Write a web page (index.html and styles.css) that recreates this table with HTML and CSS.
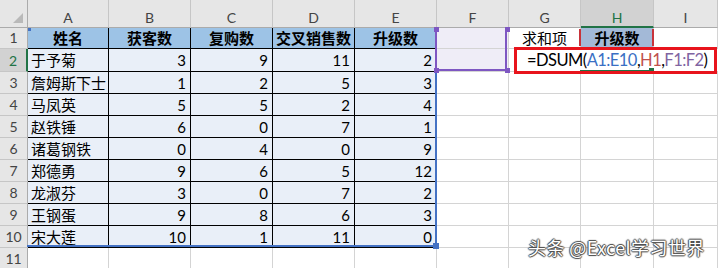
FILE: index.html
```html
<!DOCTYPE html>
<html>
<head>
<meta charset="utf-8">
<link rel="stylesheet" href="styles.css">
</head>
<body>
<div class="sheet">
  <div class="grid">
    <div class="corner"><span class="tri"></span></div>
    <div class="ch">A</div><div class="ch">B</div><div class="ch">C</div><div class="ch">D</div><div class="ch">E</div><div class="ch">F</div><div class="ch">G</div><div class="ch ch-sel">H</div><div class="ch">I</div>

    <div class="rh">1</div>
    <div class="c t th">姓名</div><div class="c t th">获客数</div><div class="c t th">复购数</div><div class="c t th">交叉销售数</div><div class="c t th">升级数</div>
    <div class="c fsel"></div><div class="c crit">求和项</div><div class="c crit-h">升级数</div><div class="c"></div>

    <div class="rh rh-sel">2</div>
    <div class="c t">于予菊</div><div class="c t n">3</div><div class="c t n">9</div><div class="c t n">11</div><div class="c t n">2</div>
    <div class="c fsel"></div><div class="c formula"><span>=DSUM(</span><span class="ref-a">A1:E10</span><span>,</span><span class="ref-h">H1</span><span>,</span><span class="ref-f">F1:F2</span><span>)</span></div>

    <div class="rh">3</div>
    <div class="c t">詹姆斯下士</div><div class="c t n">1</div><div class="c t n">2</div><div class="c t n">5</div><div class="c t n">3</div>
    <div class="c"></div><div class="c"></div><div class="c"></div><div class="c"></div>

    <div class="rh">4</div>
    <div class="c t">马凤英</div><div class="c t n">5</div><div class="c t n">5</div><div class="c t n">2</div><div class="c t n">4</div>
    <div class="c"></div><div class="c"></div><div class="c"></div><div class="c"></div>

    <div class="rh">5</div>
    <div class="c t">赵铁锤</div><div class="c t n">6</div><div class="c t n">0</div><div class="c t n">7</div><div class="c t n">1</div>
    <div class="c"></div><div class="c"></div><div class="c"></div><div class="c"></div>

    <div class="rh">6</div>
    <div class="c t">诸葛钢铁</div><div class="c t n">0</div><div class="c t n">4</div><div class="c t n">0</div><div class="c t n">9</div>
    <div class="c"></div><div class="c"></div><div class="c"></div><div class="c"></div>

    <div class="rh">7</div>
    <div class="c t">郑德勇</div><div class="c t n">9</div><div class="c t n">6</div><div class="c t n">5</div><div class="c t n">12</div>
    <div class="c"></div><div class="c"></div><div class="c"></div><div class="c"></div>

    <div class="rh">8</div>
    <div class="c t">龙淑芬</div><div class="c t n">3</div><div class="c t n">0</div><div class="c t n">7</div><div class="c t n">2</div>
    <div class="c"></div><div class="c"></div><div class="c"></div><div class="c"></div>

    <div class="rh">9</div>
    <div class="c t">王钢蛋</div><div class="c t n">9</div><div class="c t n">8</div><div class="c t n">6</div><div class="c t n">3</div>
    <div class="c"></div><div class="c"></div><div class="c"></div><div class="c"></div>

    <div class="rh">10</div>
    <div class="c t">宋大莲</div><div class="c t n">10</div><div class="c t n">1</div><div class="c t n">11</div><div class="c t n">0</div>
    <div class="c"></div><div class="c"></div><div class="c"></div><div class="c"></div>

    <div class="rh">11</div>
    <div class="c"></div><div class="c"></div><div class="c"></div><div class="c"></div><div class="c"></div>
    <div class="c"></div><div class="c"></div><div class="c"></div><div class="c"></div>
  </div>

  <!-- range highlights drawn over the grid -->
  <div class="sel-a"></div>
  <div class="handle h-a-br"></div>
  <div class="handle h-a-tl"></div>
  <div class="sel-f"></div>
  <div class="handle h-f h-f-tl"></div>
  <div class="handle h-f h-f-tr"></div>
  <div class="handle h-f h-f-bl"></div>
  <div class="handle h-f h-f-br"></div>
  <div class="sel-h"></div>
  <div class="active-line"></div>
  <div class="handle h-g"></div>
  <div class="edit-box"></div>
  <div class="watermark">头条 @Excel学习世界</div>
</div>
</body>
</html>
```

FILE: styles.css
```css
html, body {
  margin: 0;
  padding: 0;
  background: #fff;
}

.sheet {
  position: relative;
  width: 718px;
  height: 268px;
  overflow: hidden;
  font-family: Lato, "Noto Sans CJK SC", sans-serif;
  color: #000;
}

.grid {
  display: grid;
  grid-template-columns: 28px 81px 82px 82px 82px 82px 72px 72px 73px 64px;
  grid-template-rows: 28px 21px 23px repeat(9, 22px);
}

.corner {
  background: #e6e6e6;
  border-right: 1px solid #ababab;
  border-bottom: 1px solid #ababab;
  box-sizing: border-box;
  position: relative;
}

.tri {
  position: absolute;
  right: 4px;
  bottom: 4px;
  width: 0;
  height: 0;
  border-left: 10px solid transparent;
  border-bottom: 10px solid #b9b9b9;
}

.ch {
  background: #e6e6e6;
  border-right: 1px solid #c6c6c6;
  border-bottom: 1px solid #ababab;
  box-sizing: border-box;
  display: flex;
  align-items: flex-end;
  justify-content: center;
  padding-bottom: 1px;
  font-size: 14px;
  color: #444;
}

.ch-sel {
  background: #d2d2d2;
  color: #217346;
  border-bottom: 2px solid #217346;
  padding-bottom: 0;
}

.rh {
  background: #e6e6e6;
  border-right: 1px solid #ababab;
  border-bottom: 1px solid #c6c6c6;
  box-sizing: border-box;
  display: flex;
  align-items: flex-end;
  justify-content: center;
  font-size: 14px;
  color: #444;
  line-height: 20px;
}

.rh-sel {
  background: #d2d2d2;
  color: #217346;
  border-right: 2px solid #217346;
}

.c {
  border-right: 1px solid #d4d4d4;
  border-bottom: 1px solid #d4d4d4;
  box-sizing: border-box;
  font-size: 15px;
  display: flex;
  align-items: center;
  padding: 0 3px;
  white-space: nowrap;
  line-height: 20px;
}

.t {
  background: #e9eff8;
  border-right-color: #000;
  border-bottom-color: #000;
}

.th {
  background: #9dc3e6;
  font-weight: bold;
  justify-content: center;
}

.n {
  justify-content: flex-end;
  padding-right: 4px;
}

.fsel {
  background: #efedf7;
}

.crit {
  justify-content: center;
}

.crit-h {
  background: #a3b9d7;
  font-weight: bold;
  justify-content: center;
}

.formula {
  grid-column: span 3;
  border-right: none;
  font-size: 16.5px;
  padding-left: 18px;
  letter-spacing: -0.55px;
}

.ref-a { color: #3a6fc4; }
.ref-h { color: #c0504d; }
.ref-f { color: #8064a2; }

/* overlays */
.sel-a {
  position: absolute;
  left: 27px;
  top: 27px;
  width: 408px;
  height: 218px;
  border-right: 2px solid #4472c4;
  border-bottom: 2px solid #4472c4;
}

.handle {
  position: absolute;
  width: 6px;
  height: 6px;
}

.h-a-br { left: 433px; top: 243px; background: #4472c4; width: 6px; height: 6px; }
.h-a-tl { left: 28px; top: 28px; width: 3px; height: 3px; background: #4472c4; }

.sel-f {
  position: absolute;
  left: 435px;
  top: 27px;
  width: 72px;
  height: 44px;
  box-sizing: border-box;
  border: 2px solid #7e57c2;
  border-top: none;
}

.h-f { background: #7e57c2; width: 5px; height: 5px; }
.h-f-tl { left: 434px; top: 27px; }
.h-f-tr { left: 505px; top: 27px; }
.h-f-bl { left: 434px; top: 68px; }
.h-f-br { left: 505px; top: 68px; }

.sel-h {
  position: absolute;
  left: 579px;
  top: 29px;
  width: 75px;
  height: 17px;
  box-sizing: border-box;
  border-left: 2px solid #c8333a;
  border-right: 2px solid #c8333a;
}

.active-line {
  position: absolute;
  left: 580px;
  top: 70px;
  width: 73px;
  height: 2px;
  background: #217346;
}

.h-g { left: 649px; top: 68px; width: 5px; height: 5px; background: #217346; }

.edit-box {
  position: absolute;
  left: 514px;
  top: 47px;
  width: 203px;
  height: 27px;
  box-sizing: border-box;
  border: 3px solid #e8141c;
}

.watermark {
  position: absolute;
  left: 528px;
  top: 236px;
  font-family: "Noto Sans CJK SC", sans-serif;
  font-size: 18px;
  line-height: 22px;
  letter-spacing: 0.4px;
  color: #fff;
  white-space: nowrap;
  text-shadow: 1px 0 1px #444, -1px 0 1px #444, 0 1px 1px #444, 0 -1px 1px #444;
}
```
